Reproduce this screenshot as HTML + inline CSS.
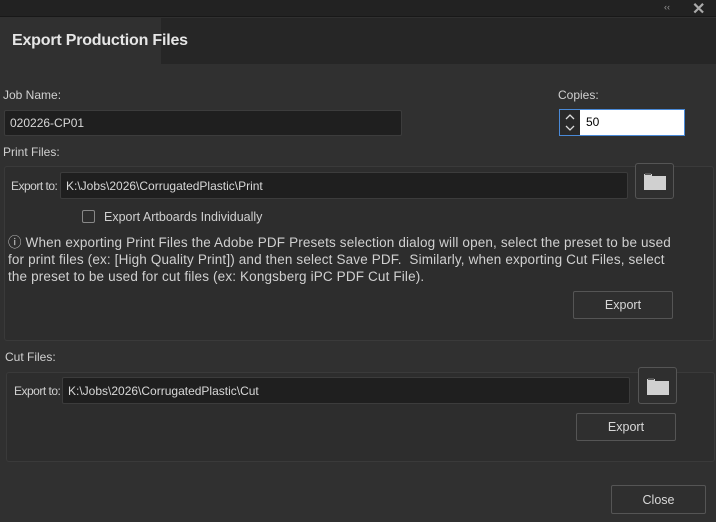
<!DOCTYPE html>
<html><head><style>
*{box-sizing:border-box;margin:0;padding:0}
body{width:716px;height:522px;background:#303030;font-family:"Liberation Sans",sans-serif;font-size:12px;color:#d0d0d0;position:relative;overflow:hidden}
.abs{position:absolute}
.input{position:absolute;background:#1f1f1f;border:1px solid #3c3c3c;border-radius:2px;color:#d8d8d8;padding-left:5px;display:flex;align-items:center;font-size:12px}
.btn{position:absolute;border:1px solid #555;border-radius:2px;background:#2f2f2f;color:#d8d8d8;display:flex;align-items:center;justify-content:center;font-size:12.5px}
.group{position:absolute;border:1px solid #3a3a3a;border-radius:3px;background:#2d2d2d}
.folder{position:absolute;border:1px solid #555;border-radius:3px;background:#2f2f2f}
.lbl{position:absolute;font-size:12px;letter-spacing:-0.5px}
</style></head><body>
<div class="abs" style="left:0;top:0;width:716px;height:17px;background:#222;border-bottom:1px solid #181818"></div>
<div class="abs" style="left:664px;top:2px;font-size:9px;color:#999">&#8249;&#8249;</div>
<div class="abs" style="left:692px;top:-1px;font-size:16px;font-weight:bold;color:#aaa">✕</div>
<div class="abs" style="left:0;top:18px;width:716px;height:46px;background:#262626"></div>
<div class="abs" style="left:0;top:18px;width:161px;height:47px;background:#303030"></div>
<div class="abs" style="left:12px;top:32px;font-size:16px;font-weight:bold;color:#e6e6e6;letter-spacing:-0.2px">Export Production Files</div>

<div class="abs" style="left:3px;top:88px">Job Name:</div>
<div class="input" style="left:4px;top:110px;width:398px;height:26px">020226-CP01</div>
<div class="abs" style="left:558px;top:88px">Copies:</div>
<div class="abs" style="left:559px;top:109px;width:126px;height:27px;border:1px solid #4a8ad8;background:#fff">
 <div class="abs" style="left:0;top:0;width:20px;height:25px;background:#2a2a2a">
  <svg width="20" height="25"><path d="M6 9l4-4 4 4M6 16l4 4 4-4" stroke="#ddd" stroke-width="1.3" fill="none"/></svg>
 </div>
 <div class="abs" style="left:26px;top:5px;color:#000">50</div>
</div>

<div class="abs" style="left:3px;top:145px">Print Files:</div>
<div class="group" style="left:4px;top:166px;width:710px;height:175px"></div>
<div class="lbl" style="left:11px;top:179px">Export to:</div>
<div class="input" style="left:60px;top:172px;width:568px;height:27px">K:\Jobs\2026\CorrugatedPlastic\Print</div>
<div class="folder" style="left:635px;top:163px;width:39px;height:36px"><svg class="abs" style="left:8px;top:8px" width="22" height="18"><path d="M0 2h8v2h14v14H0z" fill="#d0d0d0"/><rect x="1" y="1" width="6" height="2" fill="#555"/></svg></div>
<div class="abs" style="left:82px;top:210px;width:13px;height:13px;border:1px solid #888;border-radius:2px"></div>
<div class="abs" style="left:104px;top:210px;font-size:12.5px">Export Artboards Individually</div>
<div class="abs" style="left:8px;top:234px;width:710px;line-height:17px;font-size:13.5px;letter-spacing:0.15px;white-space:nowrap">ⓘ&nbsp;When exporting Print Files the Adobe PDF Presets selection dialog will open, select the preset to be used<br>for print files (ex: [High Quality Print]) and then select Save PDF.&nbsp; Similarly, when exporting Cut Files, select<br>the preset to be used for cut files (ex: Kongsberg iPC PDF Cut File).</div>
<div class="btn" style="left:573px;top:291px;width:100px;height:28px">Export</div>

<div class="abs" style="left:5px;top:350px">Cut Files:</div>
<div class="group" style="left:6px;top:372px;width:709px;height:90px"></div>
<div class="lbl" style="left:14px;top:384px">Export to:</div>
<div class="input" style="left:62px;top:377px;width:568px;height:27px">K:\Jobs\2026\CorrugatedPlastic\Cut</div>
<div class="folder" style="left:638px;top:367px;width:39px;height:37px"><svg class="abs" style="left:8px;top:9px" width="22" height="18"><path d="M0 2h8v2h14v14H0z" fill="#d0d0d0"/><rect x="1" y="1" width="6" height="2" fill="#555"/></svg></div>
<div class="btn" style="left:576px;top:413px;width:100px;height:28px">Export</div>

<div class="btn" style="left:611px;top:485px;width:95px;height:29px">Close</div>
</body></html>
